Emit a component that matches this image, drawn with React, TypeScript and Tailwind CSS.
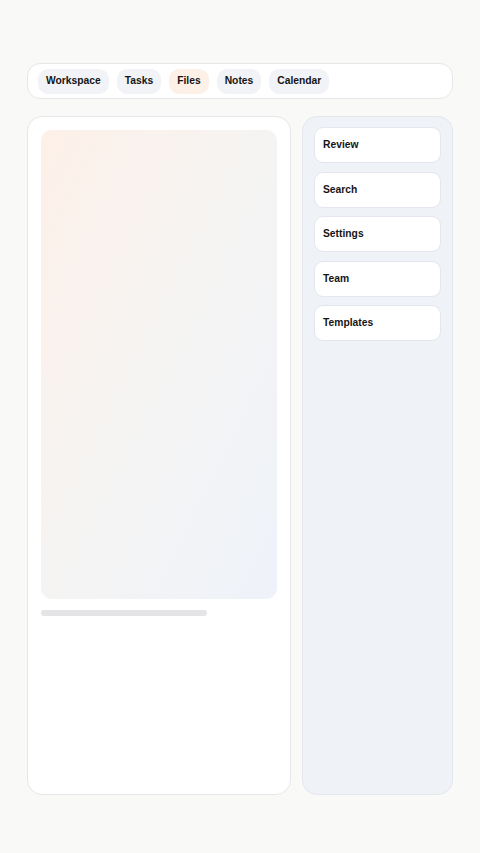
const tabs = ['Workspace', 'Tasks', 'Files', 'Notes', 'Calendar']
const active = 'Files'
const items = ['Review', 'Search', 'Settings', 'Team', 'Templates']

function Tab({ label }: { label: string }) {
  const on = label === active
  return (
    <button
      className={
        'h-[25px] px-[8px] rounded-[10px] text-[10.3px] font-bold text-[#151515] leading-none ' +
        (on ? 'bg-[#fdf0e7]' : 'bg-[#f1f3f6]')
      }
    >
      {label}
    </button>
  )
}

export default function App() {
  return (
    <div
      className="min-h-[853px] bg-[#f9f9f7] px-[27px] pt-[63px] pb-[58px] flex flex-col gap-[17px]"
      style={{ fontFamily: '"Liberation Sans", Arial, sans-serif' }}
    >
      <nav className="h-[36px] flex items-center gap-[8px] px-[10px] rounded-[13px] bg-white border border-[#e6e7e9]">
        {tabs.map(t => (
          <Tab key={t} label={t} />
        ))}
      </nav>

      <div className="flex gap-[11px] h-[679px]">
        <section className="w-[264px] shrink-0 rounded-[15px] bg-white border border-[#e6e7e9] p-[13px] flex flex-col gap-[11px]">
          <div className="h-[469px] rounded-[11px] bg-gradient-to-br from-[#fdf0e8] via-[#f5f4f3] to-[#eef2f9]" />
          <div className="h-[6px] w-[166px] rounded-full bg-[#e4e4e6]" />
        </section>

        <aside className="flex-1 rounded-[15px] bg-[#eff2f7] border border-[#e3e6ec] px-[11px] pt-[10px] flex flex-col gap-[8.5px]">
          {items.map(i => (
            <div
              key={i}
              className="h-[36px] flex items-center px-[8px] rounded-[9px] bg-white border border-[#e3e6ec] text-[10.3px] font-bold text-[#151515]"
            >
              {i}
            </div>
          ))}
        </aside>
      </div>
    </div>
  )
}
